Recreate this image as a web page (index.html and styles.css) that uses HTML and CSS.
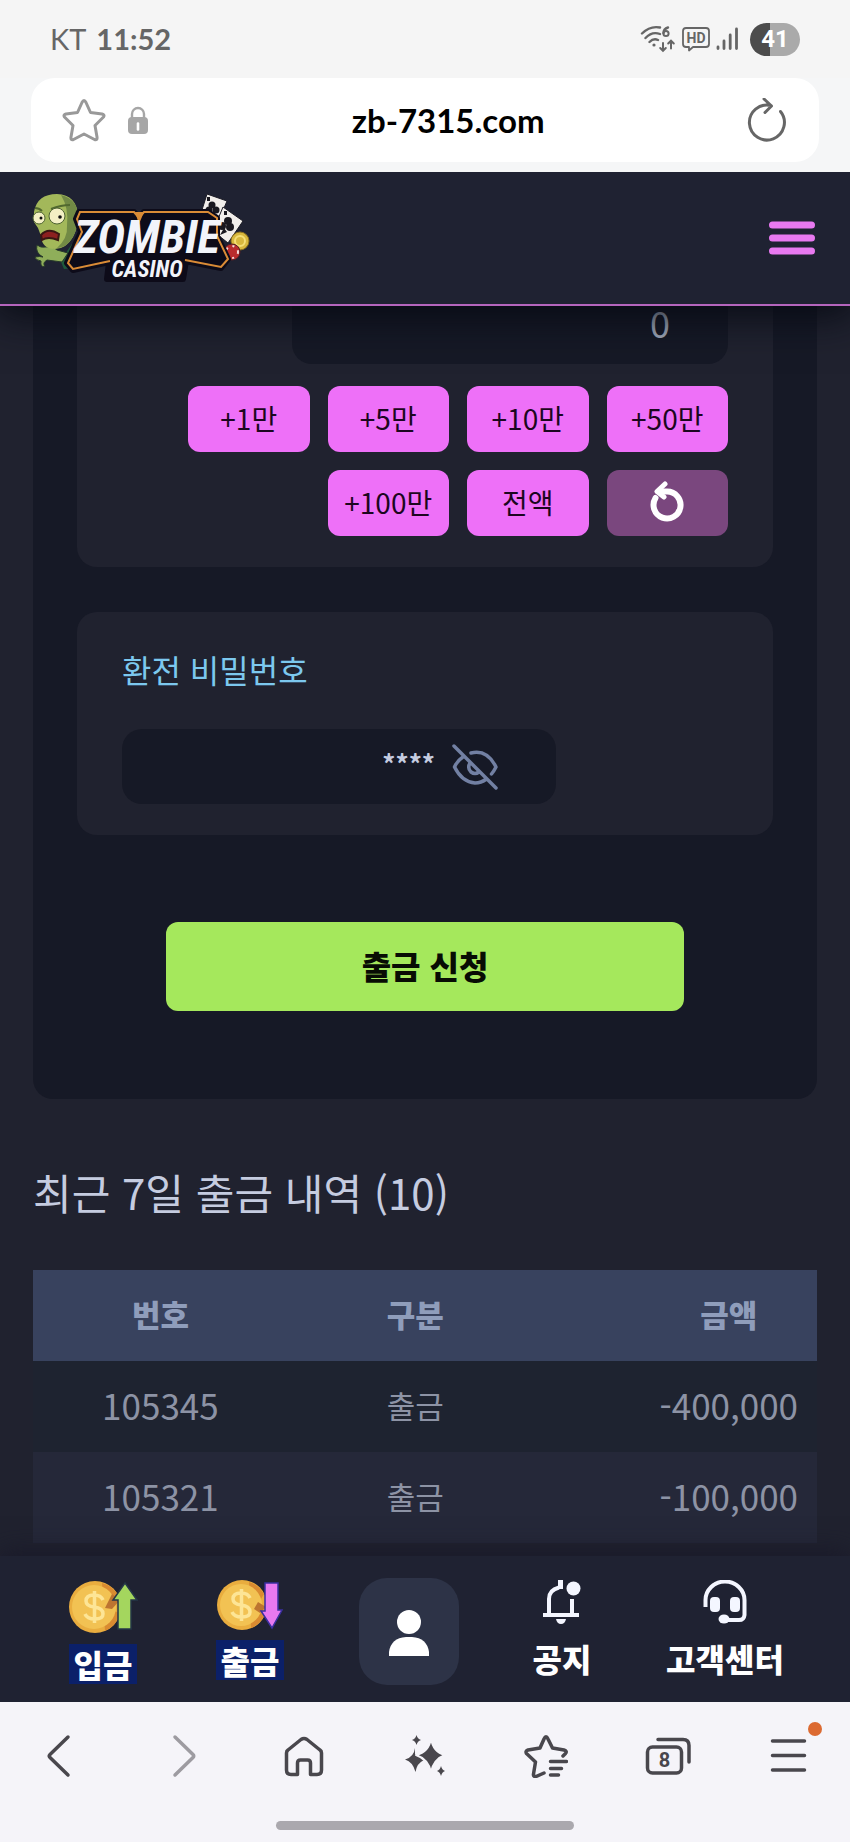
FILE: index.html
```html
<!DOCTYPE html>
<html lang="ko">
<head>
<meta charset="utf-8">
<meta name="viewport" content="width=device-width, initial-scale=1">
<title>zb-7315.com</title>
<link rel="stylesheet" href="styles.css">
</head>
<body>
<div class="status">
  <div class="status-left"><span>KT</span><b>11:52</b></div>
  <div class="status-right">
    <svg width="36" height="28" viewBox="0 0 36 28" fill="none" stroke="#666" stroke-width="2.4" stroke-linecap="round">
      <path d="M2 8.500Q10 .5 20 2.500M5.500 13Q12 6 20 9M9.500 17Q13.500 13 18 15"/>
      <circle cx="14" cy="20" r="1.600" fill="#666" stroke="none"/>
      <path d="M28 2.500Q23.500 4 23.500 8"/><circle cx="26" cy="8.500" r="2.600" stroke-width="2"/>
      <path d="M23 18v7.500M20.200 23l2.800 2.800 2.800-2.800M31 23.500V16M28.200 18.500l2.800-2.800 2.800 2.800" stroke-width="2"/>
    </svg>
    <svg width="28" height="26" viewBox="0 0 28 26" fill="none" stroke="#666" stroke-width="1.800" stroke-linejoin="round">
      <path d="M4 2h20q3 0 3 3v13q0 3-3 3H11l-4 3.500V21H4q-3 0-3-3V5q0-3 3-3Z"/>
      <text x="14" y="17" text-anchor="middle" class="hd">HD</text>
    </svg>
    <svg width="22" height="24" viewBox="0 0 22 24" stroke="#666" stroke-width="2.800" stroke-linecap="round">
      <path d="M2 20v1.500M8 14v7.500M14.200 8v13.500M20.500 2v19.500"/>
    </svg>
    <span class="battery">41</span>
  </div>
</div>
<div class="urlbar">
  <div class="urlbox">
    <div class="url-side">
      <button class="plain" type="button" aria-label="북마크"><svg width="44" height="44" viewBox="0 0 44 44" fill="none" stroke="#999" stroke-width="3" stroke-linejoin="round"><path d="M22 2.500Q23 2.500 24 4.500L28.500 14.500 40 16Q43 17 41.500 19L33 27.500 35 39Q35.500 42.500 32.500 41.500L22 36 11.500 41.500Q8.500 42.500 9 39L11 27.500 2.500 19Q1 17 4 16L15.500 14.500 20 4.500Q21 2.500 22 2.500Z"/></svg></button>
      <svg width="22" height="28" viewBox="0 0 22 28"><path d="M5 13V8a6 6 0 0 1 12 0v5" fill="none" stroke="#a6a6a6" stroke-width="2.400"/><rect x="1" y="11" width="20" height="17" rx="4" fill="#a6a6a6"/><path d="M11 17.500v6" stroke="#fff" stroke-width="2.600" stroke-linecap="round"/></svg>
    </div>
    <span class="url">zb-7315.com</span>
    <button class="plain" type="button" aria-label="새로고침"><svg width="40" height="44" viewBox="0 0 40 44" fill="none" stroke="#666" stroke-width="3" stroke-linecap="round" stroke-linejoin="round"><path d="M34.500 13.500A17.500 17.500 0 1 1 25 7.500M18 1l7.500 7L19 14.500"/></svg></button>
  </div>
</div>

<header class="header">
  <a href="#" aria-label="Zombie Casino">
    <svg class="logo" width="224" height="96" viewBox="0 0 224 96">
      <path d="M31 72Q36 62 42 54L52 58 45 78 34 79Z" fill="#1f5a3c"/>
      <path d="M7 55q4 3 8 2 8-1 12 3l11 3-6 9-15-2q-5 3-2 6-5 2-4-5-6-1-6-4 5-1 8 0-8-4-6-12Z" fill="#8fae5a" stroke="#26382a" stroke-width="1"/>
      <path d="M4 22Q7 4 27 4 47 5 48 26 48 38 43 47 36 59 25 59 12 59 11 46L8 38 4 32Z" fill="#a3b85a"/>
      <path d="M31 5Q48 9 48 27 48 40 41 50 35 58 27 58 38 48 37 36 39 18 31 5Z" fill="#728a45"/>
      <path d="M21 19q10-4 19-4M5 18q4 0 7 3" stroke="#52692f" stroke-width="2" fill="none"/>
      <circle cx="9" cy="28" r="6" fill="#f3efc4" stroke="#4d6232"/><circle cx="27" cy="26" r="8" fill="#f3efc4" stroke="#4d6232"/>
      <circle cx="11" cy="28" r="1.500" fill="#111"/><circle cx="30" cy="27" r="1.800" fill="#111"/>
      <path d="M11 45Q18 37 29 44L28 50Q18 46 12 50Z" fill="#8c2020" stroke="#391713" stroke-width="2"/>
      <g fill="#f1eeeb" stroke="#1b1b25" stroke-width="1"><path d="M177 4l20 7-8 19-18-7Z"/><path d="M193 17l20 14-15 22-15-12Z"/></g>
      <g fill="#19181f"><circle cx="182" cy="15" r="3.500"/><circle cx="186" cy="20" r="3.500"/><circle cx="179" cy="20" r="3.500"/><circle cx="198" cy="31" r="4"/><circle cx="200" cy="37" r="4"/><circle cx="192" cy="36" r="4"/><path d="M194 38l-4 7 7-3ZM177 7h3v4h-3ZM194 21h3v4h-3Z"/></g>
      <circle cx="210" cy="51" r="9" fill="#d8b83d" stroke="#8d711e"/><circle cx="210" cy="51" r="5" fill="none" stroke="#f5df77" stroke-width="2"/>
      <circle cx="202" cy="62" r="8" fill="#b92b2d" stroke="#551e25"/><circle cx="202" cy="62" r="6" fill="none" stroke="#f3dddd" stroke-width="2" stroke-dasharray="2 5"/>
      <path d="M49 22H104L109 28 114 22H178L187 28V46L198 69 191 78 156 71 153 89H77L79 72 43 80 37 73 51 42 46 29Z" fill="#0d0b19" stroke="#0d0b19" stroke-width="6" stroke-linejoin="round"/>
      <path d="M80 71 43 79 38 73 52 42 47 29 50 22H104L109 28 114 22H178L187 28V46L198 69 191 77 155 70" fill="none" stroke="#da8b36" stroke-width="2"/>
      <path d="M105 22h9l-5 12Z" fill="#da8b36"/>
      <text class="logo-main" x="117" y="63" text-anchor="middle">ZOMBIE</text>
      <text class="logo-sub" x="117" y="87" text-anchor="middle">CASINO</text>
    </svg>
  </a>
  <button class="plain" type="button" aria-label="메뉴"><svg width="48" height="36" viewBox="0 0 48 36" stroke="#e879f0" stroke-width="7" stroke-linecap="round"><path d="M4.500 5h39M4.500 18h39M4.500 31h39"/></svg></button>
</header>

<main class="page">
  <form class="panel">
    <section class="card amount">
      <input class="field amount-input" type="text" value="0" aria-label="출금 금액">
      <div class="chips">
        <button class="chip" type="button">+1만</button>
        <button class="chip" type="button">+5만</button>
        <button class="chip" type="button">+10만</button>
        <button class="chip" type="button">+50만</button>
        <button class="chip second" type="button">+100만</button>
        <button class="chip" type="button">전액</button>
        <button class="chip reset" type="button" aria-label="초기화"><svg width="36" height="42" viewBox="0 0 36 42" fill="none" stroke="#fff" stroke-width="6" stroke-linecap="round" stroke-linejoin="round"><path d="M6.500 17A13.500 13.500 0 1 0 18 10.500H10"/><path d="M16 3 8 10.500 15 16" stroke-width="5"/></svg></button>
      </div>
    </section>
    <section class="card secret">
      <label class="label" for="pw">환전 비밀번호</label>
      <div class="field pw-box">
        <input id="pw" type="text" value="****">
        <button class="plain" type="button" aria-label="비밀번호 표시"><svg width="46" height="46" viewBox="0 0 46 46" fill="none" stroke="#7280a3" stroke-width="3.500" stroke-linecap="round" stroke-linejoin="round"><path d="M2 2l42 42M11.500 12.500Q5 17 2.500 23 10 38 23 39 29 39 34.500 35M19 9Q35 5 44 23 42 27 39.500 30M18 19q-3 5 1 9 4 3 8 0"/></svg></button>
      </div>
    </section>
    <button class="submit" type="submit">출금 신청</button>
  </form>
  <h2 class="title">최근 7일 출금 내역 (10)</h2>
  <table class="history">
    <thead><tr><th>번호</th><th>구분</th><th>금액</th></tr></thead>
    <tbody>
      <tr><td class="num">105345</td><td>출금</td><td class="num">-400,000</td></tr>
      <tr><td class="num">105321</td><td>출금</td><td class="num">-100,000</td></tr>
    </tbody>
  </table>
</main>

<nav class="tabs">
  <a href="#" class="tab">
    <svg width="70" height="54" viewBox="0 0 70 54"><circle cx="27" cy="27" r="26" fill="#e9ad3f"/><path d="M34 3a26 26 0 0 1 17 14L40 29l12 4a26 26 0 0 1-15 18Z" fill="#d98b31"/><circle cx="26" cy="27" r="22" fill="#f2c253"/><path d="M44 14l8 6-8 9-7-1Z" fill="#bd7430"/><path d="M35 20Q33 15 26 15 18 15 18 21 18 26 26 27 35 28 35 34 35 39 27 39 19 39 17 34M26.500 11v32" fill="none" stroke="#fde596" stroke-width="3.500"/><path d="M57 3 69 20H63V49H50V20H45Z" fill="#a4d65e" stroke="#243647" stroke-width="1.500"/></svg>
    <span class="tag">입금</span>
  </a>
  <a href="#" class="tab">
    <svg width="68" height="50" viewBox="0 0 68 50"><circle cx="26" cy="25" r="25" fill="#e9ad3f"/><path d="M33 2a25 25 0 0 1 15 12L40 27l9 7a25 25 0 0 1-14 14Z" fill="#d98b31"/><circle cx="25" cy="25" r="21" fill="#f2c253"/><path d="M42 22l8 5-6 6-6-4Z" fill="#bd7430"/><path d="M34 18Q32 13 25 13 17 13 17 19 17 24 25 25 34 26 34 32 34 37 26 37 18 37 16 32M25.500 9v32" fill="none" stroke="#fde596" stroke-width="3.500"/><path d="M49 3H62V30H66L56 48 45 31H49Z" fill="#e879f0" stroke="#3a2fa0" stroke-width="1.500"/></svg>
    <span class="tag">출금</span>
  </a>
  <a href="#" class="tab me" aria-label="내 정보"><svg width="42" height="46" viewBox="0 0 42 46" fill="#fff"><circle cx="21" cy="12" r="12"/><path d="M1 46V42Q3 28 18 27H24Q39 28 41 42V46Z"/></svg></a>
  <a href="#" class="tab">
    <svg width="40" height="44" viewBox="0 0 40 44" fill="none" stroke="#f4f6ff" stroke-width="4"><path d="M1 35H37M7 35V19Q7 10 17 7.500M30 19V35"/><path d="M16 0h5v9h-5Z" fill="#f4f6ff" stroke="none"/><circle cx="31.500" cy="8.500" r="7" fill="#f4f6ff" stroke="none"/><path d="M14 39h10q-1 5-5 5t-5-5Z" fill="#f4f6ff" stroke="none"/></svg>
    <span>공지</span>
  </a>
  <a href="#" class="tab">
    <svg width="44" height="44" viewBox="0 0 44 44" fill="none" stroke="#f4f6ff" stroke-width="4"><path d="M2.500 27V20a19 18 0 0 1 39 0V35Q41 40 36 40H24"/><rect x="7" y="17" width="10" height="15" rx="4" fill="#f4f6ff" stroke="none"/><rect x="27" y="17" width="10" height="15" rx="4" fill="#f4f6ff" stroke="none"/><ellipse cx="21" cy="39" rx="5.500" ry="4.500" fill="#f4f6ff" stroke="none"/></svg>
    <span>고객센터</span>
  </a>
</nav>

<footer class="browser">
  <div class="tools">
    <button class="plain" type="button" aria-label="뒤로"><svg width="44" height="44" viewBox="0 0 44 44"><path d="M29 3 11 20.500Q9.500 22 11 23.500L29 41"/></svg></button>
    <button class="plain off" type="button" aria-label="앞으로"><svg width="44" height="44" viewBox="0 0 44 44"><path d="M15 3 33 20.500Q34.500 22 33 23.500L15 41"/></svg></button>
    <button class="plain" type="button" aria-label="홈"><svg width="44" height="44" viewBox="0 0 44 44"><path d="M4.500 19Q4.500 17 6 16L19 5.500Q22 3.500 25 5.500L38 16Q39.500 17 39.500 19V36Q39.500 40.500 35 40.500H28.500V29Q28.500 26 25.500 26H18.500Q15.500 26 15.500 29V40.500H9Q4.500 40.500 4.500 36Z"/></svg></button>
    <button class="plain" type="button" aria-label="어시스턴트"><svg width="44" height="44" viewBox="0 0 44 44"><g class="solid"><path d="M12 14Q11 23 2 25.500 10 28 12.500 38 14 29 21 26L12 20Z"/><path class="cut" d="M28 4Q30 18 42 21 31 25 28 38 25 25 13 21 26 18 28 4Z"/><path d="M13.500 1Q14.500 5 18 6 14.500 7 13.500 11 12.500 7 9 6 12.500 5 13.500 1ZM38 32Q39 36 42 37 39 38 38 42 37 38 34 37 37 36 38 32Z"/></g></svg></button>
    <button class="plain" type="button" aria-label="북마크 목록"><svg width="44" height="44" viewBox="0 0 44 44"><path d="M20 39 12 42.500Q9 43 9.500 40L11.500 28 2.500 19.500Q1 17 4 16L16 14 20 5Q22 .5 24 5L28.500 14 40 16Q43.500 17 41.500 19.500L39 22M26.500 27.500H42.500M26.500 34.500H37.500M26.500 41H34.500"/></svg></button>
    <button class="plain" type="button" aria-label="탭 8개"><svg width="46" height="44" viewBox="0 0 46 44"><rect x="2.500" y="13" width="34" height="26" rx="5"/><path d="M13 5.500H38Q44 5.500 44 11.500V28"/><text x="19.500" y="33" text-anchor="middle" class="count">8</text></svg></button>
    <button class="plain more" type="button" aria-label="더보기"><svg width="44" height="44" viewBox="0 0 44 44"><path d="M5.500 7H37.500M5.500 21.500H37.500M5.500 36H37.500"/></svg></button>
  </div>
  <div class="handle"></div>
</footer>
</body>
</html>
```
FILE: styles.css
```css
* { box-sizing: border-box; }
body {
  margin: 0;
  min-height: 100vh;
  display: flex;
  flex-direction: column;
  background: #20222f;
  font-family: "Noto Sans CJK KR", sans-serif;
}
svg { display: block; flex: none; }
a { color: inherit; text-decoration: none; }
button, input { font: inherit; color: inherit; border: 0; }
.plain { background: none; padding: 0; display: flex; }

.status {
  position: relative;
  z-index: 2;
  height: 78px;
  padding: 0 50px;
  display: flex;
  align-items: center;
  justify-content: space-between;
  background: #f5f5f5;
  color: #666;
  font: 29px/36px Lato, sans-serif;
}
.status-left { display: flex; gap: 10px; }
.status-right { display: flex; align-items: center; gap: 6px; }
.hd { font: 700 14px Roboto, sans-serif; fill: #666; stroke: none; }
.battery {
  width: 50px;
  margin-left: 6px;
  border-radius: 17px;
  background: linear-gradient(90deg, #4c4c4c 40%, #aaa 40%);
  color: #fff;
  font: 700 24px/33px Roboto, sans-serif;
  text-align: center;
}
.urlbar { position: relative; z-index: 2; padding: 0 31px 10px; background: #f5f6f7; }
.urlbox {
  height: 84px;
  padding: 0 33px 0 31px;
  display: grid;
  grid-template-columns: 6fr auto 5fr;
  align-items: center;
  border-radius: 24px;
  background: #fff;
}
.urlbox > :last-child { justify-self: end; }
.url-side { display: flex; align-items: center; gap: 21px; }
.url { font: 700 33px/40px Lato, sans-serif; color: #000; }

.header {
  position: relative;
  z-index: 1;
  height: 134px;
  padding: 0 34px 0 30px;
  display: flex;
  align-items: center;
  justify-content: space-between;
  background: #1f2232;
  border-bottom: 2px solid #b565bd;
  box-shadow: 0 4px 40px 4px #060912;
}
.logo-main, .logo-sub {
  font-family: "Liberation Sans Narrow", "Roboto Condensed", "DejaVu Sans Condensed", sans-serif;
  font-weight: 700;
  font-style: italic;
  fill: #f2f4fa;
}
.logo-main { font-size: 47px; }
.logo-sub { font-size: 23px; }

.page { flex: 1; margin-top: -18px; padding: 0 33px; color: #c5cce0; }
.panel {
  padding: 0 44px 88px;
  display: flex;
  flex-direction: column;
  border-radius: 0 0 20px 20px;
  background: #161926;
}
.card { padding: 0 45px; border-radius: 20px; background: #20222f; }
.field { border-radius: 20px; background: #161926; }
.amount {
  padding-bottom: 31px;
  border-radius: 0 0 20px 20px;
  display: flex;
  flex-direction: column;
  align-items: flex-end;
  gap: 22px;
}
.amount-input {
  width: 72%;
  height: 76px;
  padding: 0 58px 8px;
  text-align: right;
  font-size: 36px;
  color: #a3acbe;
}
.chips { width: 540px; max-width: 100%; display: grid; grid-template-columns: repeat(4, 1fr); gap: 18px; }
.chip {
  height: 66px;
  padding: 0 0 2px;
  border-radius: 12px;
  background: #ee70f8;
  color: #1c0620;
  font-size: 28px;
}
.second { grid-column: 2; }
.reset { display: grid; place-items: center; background: #7a477e; }
.secret { margin-top: 45px; padding-top: 33px; padding-bottom: 31px; }
.label { display: block; font-size: 32px; line-height: 48px; color: #7cc8ee; }
.pw-box {
  width: 434px;
  max-width: 100%;
  height: 75px;
  margin-top: 36px;
  padding-right: 58px;
  display: flex;
  align-items: center;
  gap: 17px;
}
.pw-box input {
  flex: 1;
  min-width: 0;
  padding: 0 0 8px;
  background: none;
  text-align: right;
  font-size: 26px;
  font-weight: 700;
  color: #c5cce0;
}
.submit {
  height: 89px;
  margin: 87px 89px 0;
  padding: 0 0 4px;
  border-radius: 12px;
  background: #a5e85c;
  color: #080c04;
  font-size: 32px;
  font-weight: 900;
}
.title { margin: 60px 0 45px; font-size: 42px; line-height: 66px; font-weight: 400; }
.history { width: 100%; border-collapse: collapse; table-layout: fixed; text-align: center; font-size: 31px; color: #8d93a5; }
.history th, .history td { height: 91px; padding: 0 0 4px; }
.history th { background: #38425e; color: #8f9dbb; font-weight: 900; }
.history th:last-child, .history td:last-child { width: 35%; padding-left: 98px; }
.history td { background: #1e2330; }
.history tr:nth-child(2) td { background: #252839; }
.history .num { font-size: 35px; }

.tabs {
  position: relative;
  height: 146px;
  margin-top: 13px;
  padding: 22px 30px 0;
  display: grid;
  grid-template-columns: 146fr 148fr 170fr 136fr 190fr;
  justify-items: center;
  align-items: start;
  background: #1f2232;
  box-shadow: 0 -4px 24px #191929;
  color: #fff;
  font-size: 32px;
  font-weight: 900;
  line-height: 40px;
}
.tab { display: flex; flex-direction: column; align-items: center; gap: 14px; }
.tab svg { margin-top: 2px; }
.tag { margin-top: -4px; padding: 0 5px; background: #0b2069; }
.me { width: 100px; height: 107px; justify-content: center; border-radius: 28px; background: #2d3347; }

.browser { position: relative; z-index: 1; height: 140px; background: #f5f4f9; }
.tools { height: 106px; padding-top: 32px; display: grid; grid-template-columns: repeat(7, 1fr); justify-items: center; align-items: start; }
.tools svg { fill: none; stroke: #49474d; stroke-width: 3.5px; stroke-linecap: round; stroke-linejoin: round; }
.tools .off svg { stroke: #9d9ba1; }
.tools .solid { fill: #49474d; stroke: none; }
.tools .cut { stroke: #f5f4f9; stroke-width: 2px; }
.tools .count { font: 700 20px Roboto, sans-serif; fill: #49474d; stroke: none; }
.more { position: relative; }
.more::after { content: ""; position: absolute; right: -11px; top: -12px; width: 14px; height: 14px; border-radius: 50%; background: #dc6a31; }
.handle { width: 35%; height: 9px; margin: 13px auto 0; border-radius: 5px; background: #aaa8ae; }
```
